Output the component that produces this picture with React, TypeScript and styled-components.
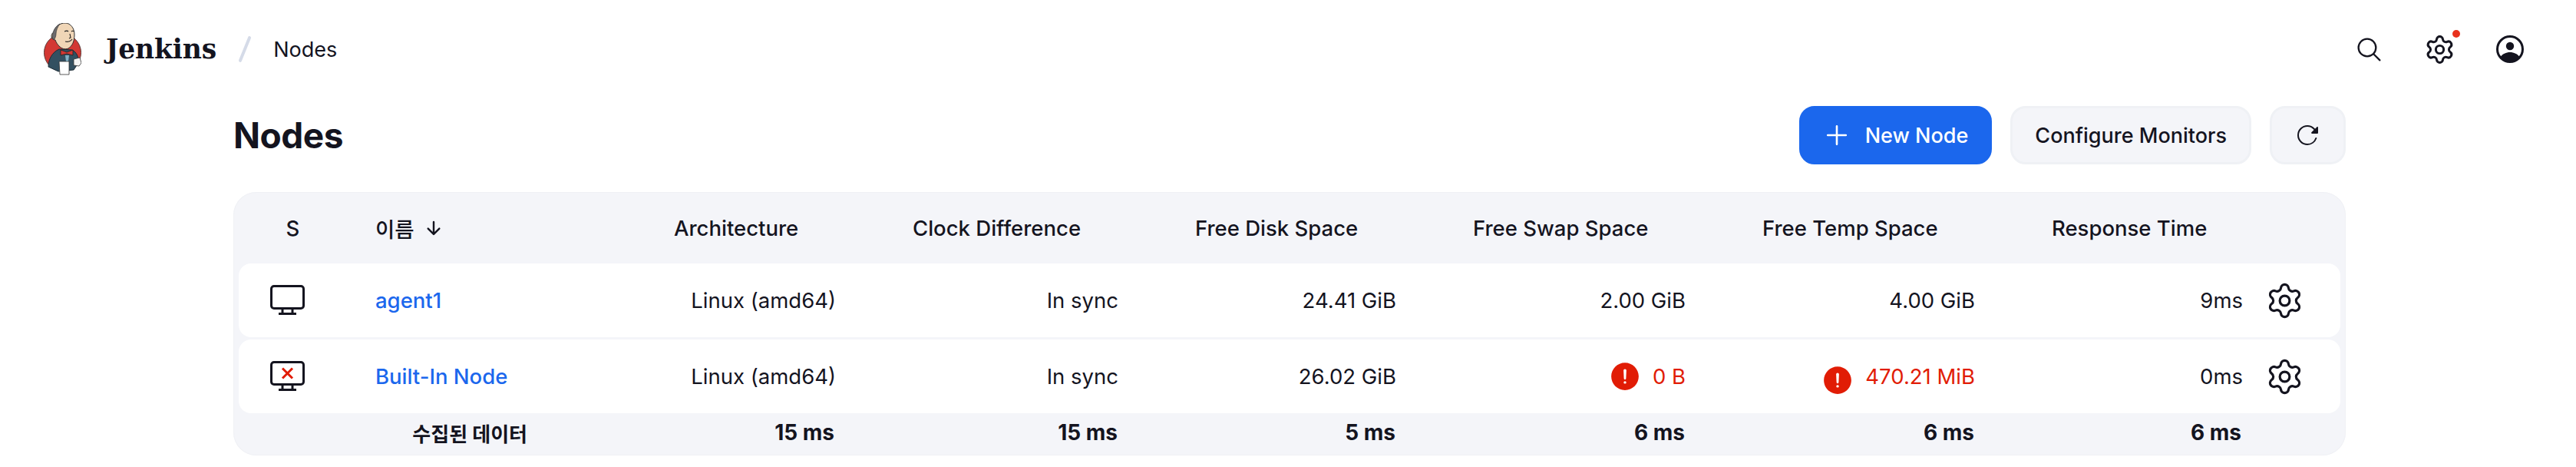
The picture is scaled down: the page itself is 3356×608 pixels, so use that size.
import React from "react";
import styled, { createGlobalStyle } from "styled-components";
import { IoSearchOutline, IoReloadOutline, IoAddOutline, IoArrowDownOutline, IoAlertCircle } from "react-icons/io5";
import { Settings } from "lucide-react";

const INK = "#14141f";
const Global = createGlobalStyle`
  html, body { margin: 0; background: #fff; }
  body { font-family: Inter, "Noto Sans CJK KR", sans-serif; color: ${INK}; }
  a { text-decoration: none; }
`;

const Page = styled.div`
  width: 3356px;
  height: 608px;
  overflow: hidden;
`;
const TopBar = styled.header`
  height: 128px;
  display: flex;
  align-items: center;
  padding: 0 68px 0 57px;
`;
const Brand = styled.div`
  display: flex;
  align-items: center;
  gap: 32px;
`;
const BrandName = styled.span`
  font-family: "DejaVu Serif", serif;
  font-weight: 700;
  font-size: 34.5px;
  letter-spacing: -0.1px;
`;
const Slash = styled.span`
  width: 4px;
  height: 36px;
  margin: 0 35px;
  background: #d5dbe8;
  border-radius: 2px;
  transform: rotate(22deg);
`;
const Crumb = styled.span`
  font-size: 27px;
  flex: 1;
`;
const TopIcons = styled.div`
  display: flex;
  align-items: center;
  gap: 53px;
`;
const IconSlot = styled.span`
  position: relative;
  display: flex;
  color: ${INK};
`;
const Dot = styled.span`
  position: absolute;
  top: -5px;
  right: -6px;
  width: 10px;
  height: 10px;
  border-radius: 50%;
  background: #e8321d;
`;
const Main = styled.main`
  padding: 0 300px 0 304px;
`;
const TitleRow = styled.div`
  display: flex;
  align-items: center;
  justify-content: space-between;
  height: 86px;
  margin: 5px 0 31px;
`;
const Title = styled.h1`
  margin: 0;
  font-size: 46px;
  font-weight: 700;
  letter-spacing: -0.5px;
`;
const Actions = styled.div`
  display: flex;
  gap: 24px;
`;
const Button = styled.button<{ $primary?: boolean; $square?: boolean }>`
  height: 76px;
  box-sizing: border-box;
  display: flex;
  align-items: center;
  justify-content: center;
  gap: 16px;
  padding: ${(p) => (p.$square ? "0" : p.$primary ? "0 28px 0 25px" : "0 29px")};
  width: ${(p) => (p.$square ? "99px" : "auto")};
  border-radius: 20px;
  border: 3px solid ${(p) => (p.$primary ? "#1b67ed" : "#eff1f5")};
  background: ${(p) => (p.$primary ? "#1b67ed" : "#f4f5f9")};
  color: ${(p) => (p.$primary ? "#fff" : INK)};
  font: 450 27px Inter, sans-serif;
`;
const Table = styled.div`
  background: #f4f5f9;
  border-radius: 30px;
  padding: 0 7px;
  height: 343px;
  box-sizing: border-box;
  box-shadow: inset 0 0 0 1px #f0f1f5;
`;
const COLS = "129px 389px 311px 368px 362px 377px 377px 314px 111px";
const HeadRow = styled.div`
  display: grid;
  grid-template-columns: ${COLS};
  align-items: center;
  height: 93px;
  font-size: 27.5px;
  font-weight: 450;
`;
const BodyRow = styled.div`
  display: grid;
  grid-template-columns: ${COLS};
  align-items: center;
  height: 96px;
  margin-bottom: 3px;
  background: #fff;
  border-radius: 16px;
  font-size: 27.5px;
`;
const FootRow = styled.div`
  display: grid;
  grid-template-columns: ${COLS};
  align-items: center;
  height: 50px;
  margin-top: -3px;
  font-size: 28px;
  font-weight: 700;
`;
const Head = styled.span`
  padding-left: 49px;
  display: flex;
  align-items: center;
  gap: 12px;
`;
const StatusHead = styled.span`
  text-align: center;
  padding-left: 12px;
`;
const Status = styled.span`
  display: flex;
  padding-left: 41px;
`;
const NameLink = styled.a`
  padding-left: 49px;
  color: #1b67ed;
  font-weight: 450;
`;
const Num = styled.span<{ $alert?: boolean; $pad?: number }>`
  display: flex;
  align-items: center;
  justify-content: flex-end;
  gap: 14px;
  padding-right: ${(p) => p.$pad ?? 51}px;
  color: ${(p) => (p.$alert ? "#e11c05" : "inherit")};
`;
const Alert = styled(IoAlertCircle)<{ $drop?: boolean }>`
  width: 44px;
  height: 44px;
  margin-top: ${(p) => (p.$drop ? "10px" : "0")};
  color: #e11c05;
`;
const GearCell = styled.span`
  display: flex;
  padding-left: 13px;
`;
const FootLabel = styled.span`
  grid-column: 2;
  text-align: right;
  padding-right: 142px;
  font-size: 26px;
`;
const Spacer = styled.span``;

function Logo() {
  return (
    <svg width="49" height="68" viewBox="0 0 49 68">
      <ellipse cx="24.5" cy="38.5" rx="24" ry="24" fill="#d33833" stroke="#5a3a38" strokeWidth="1" />
      <path d="M6 57c0-10 5-19 14-23l17 1c6 3 9 10 8 17l-6 9-20 2z" fill="#335061" stroke="#1d2c36" strokeWidth="1" />
      <path d="M13 12C15 4 21 0 28 0c7 0 12 7 12 15 0 9-3 15-8 18-5 2-9 0-12-3-2-2-4-5-5-8-3 0-5-2-5-5 0-2 1-4 3-5z" fill="#f0d6b7" stroke="#2f2f2f" strokeWidth="1" />
      <path d="M11 20c0-8 3-15 10-19-3 4-5 9-5 13 0 3-1 5-2 7z" fill="#6d6b6d" stroke="#2f2f2f" strokeWidth="0.6" />
      <path d="M27 11c2-1 4-1 5 0M36 11c1-1 3-1 3 0M28 24c3 1 7 0 9-3M34 14l1 5-2 1" stroke="#222" strokeWidth="1.1" fill="none" />
      <path d="M22 35l8 3 8-3v7l-8-2-8 2z" fill="#d33833" stroke="#222" strokeWidth="0.8" />
      <path d="M28 42h5l-1 8h-3z" fill="#81b0c4" />
      <path d="M20 50h13v17H21z" fill="#fff" stroke="#333" strokeWidth="0.8" />
      <path d="M39 47l8-2 2 7-3 4-7-1z" fill="#f4f4f4" stroke="#333" strokeWidth="0.8" />
    </svg>
  );
}

function Monitor({ failed }: { failed?: boolean }) {
  return (
    <svg width="45" height="40" viewBox="0 0 45 40" fill="none">
      <rect x="1.5" y="1.5" width="42" height="29" rx="3.5" stroke={INK} strokeWidth="3" />
      <path d="M16 31v6M29 31v6M11 37.5h23" stroke={INK} strokeWidth="3" />
      {failed && <path d="M16 9.5l13 13M29 9.5l-13 13" stroke="#e11c05" strokeWidth="3" />}
    </svg>
  );
}

function UserIcon() {
  return (
    <svg width="36" height="36" viewBox="0 0 36 36">
      <circle cx="18" cy="18" r="16.5" fill="none" stroke={INK} strokeWidth="3" />
      <circle cx="18" cy="14" r="5.2" fill={INK} />
      <path d="M5 29c3-5 8-7 13-7s10 2 13 7c-3 4-8 6-13 6S8 33 5 29z" fill={INK} />
    </svg>
  );
}

export default function App() {
  return (
    <Page>
      <Global />
      <TopBar>
        <Brand>
          <Logo />
          <BrandName>Jenkins</BrandName>
        </Brand>
        <Slash />
        <Crumb>Nodes</Crumb>
        <TopIcons>
          <IconSlot><IoSearchOutline size={37} /></IconSlot>
          <IconSlot><Settings size={41} strokeWidth={1.75} /><Dot /></IconSlot>
          <IconSlot><UserIcon /></IconSlot>
        </TopIcons>
      </TopBar>
      <Main>
        <TitleRow>
          <Title>Nodes</Title>
          <Actions>
            <Button $primary><IoAddOutline size={42} />New Node</Button>
            <Button>Configure Monitors</Button>
            <Button $square><IoReloadOutline size={32} /></Button>
          </Actions>
        </TitleRow>
        <Table>
          <HeadRow>
            <StatusHead>S</StatusHead>
            <Head>이름 <IoArrowDownOutline size={26} /></Head>
            <Head>Architecture</Head>
            <Head>Clock Difference</Head>
            <Head>Free Disk Space</Head>
            <Head>Free Swap Space</Head>
            <Head>Free Temp Space</Head>
            <Head>Response Time</Head>
            <Spacer />
          </HeadRow>
          <BodyRow>
            <Status><Monitor /></Status>
            <NameLink href="#">agent1</NameLink>
            <Num>Linux (amd64)</Num>
            <Num>In sync</Num>
            <Num>24.41 GiB</Num>
            <Num>2.00 GiB</Num>
            <Num>4.00 GiB</Num>
            <Num $pad={16}>9ms</Num>
            <GearCell><Settings size={51} strokeWidth={1.5} /></GearCell>
          </BodyRow>
          <BodyRow>
            <Status><Monitor failed /></Status>
            <NameLink href="#">Built-In Node</NameLink>
            <Num>Linux (amd64)</Num>
            <Num>In sync</Num>
            <Num>26.02 GiB</Num>
            <Num $alert><Alert />0 B</Num>
            <Num $alert><Alert $drop />470.21 MiB</Num>
            <Num $pad={16}>0ms</Num>
            <GearCell><Settings size={51} strokeWidth={1.5} /></GearCell>
          </BodyRow>
          <FootRow>
            <FootLabel>수집된 데이터</FootLabel>
            <Num $pad={53}>15 ms</Num>
            <Num $pad={52}>15 ms</Num>
            <Num $pad={52}>5 ms</Num>
            <Num $pad={52}>6 ms</Num>
            <Num $pad={52}>6 ms</Num>
            <Num $pad={18}>6 ms</Num>
          </FootRow>
        </Table>
      </Main>
    </Page>
  );
}
